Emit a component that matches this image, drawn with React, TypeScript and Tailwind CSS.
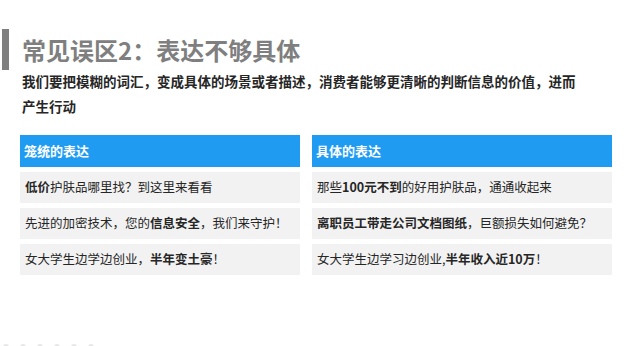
const vague = [
  <><b>低价</b>护肤品哪里找？到这里来看看</>,
  <>先进的加密技术，您的<b>信息安全</b>，我们来守护！</>,
  <>女大学生边学边创业，<b>半年变土豪</b>！</>,
];

const concrete = [
  <>那些<b>100元不到</b>的好用护肤品，通通收起来</>,
  <><b>离职员工带走公司文档图纸</b>，巨额损失如何避免？</>,
  <>女大学生边学习边创业,<b>半年收入近10万</b>！</>,
];

function Column({ title, items, width }: { title: string; items: React.ReactNode[]; width: string }) {
  return (
    <div className={`flex flex-col gap-[5px] ${width}`}>
      <div className="h-[32px] flex items-center px-[4px] bg-[#1f9cf2] text-white text-[13px] font-bold">
        {title}
      </div>
      {items.map((item, i) => (
        <div key={i} className="h-[31px] flex items-center px-[5px] bg-[#f2f2f2] text-[12.5px] text-[#262626] whitespace-nowrap">
          <span>{item}</span>
        </div>
      ))}
    </div>
  );
}

export default function App() {
  return (
    <div className="w-[640px] h-[346px] bg-white overflow-hidden flex flex-col font-['Microsoft_YaHei','Noto_Sans_CJK_SC',sans-serif]">
      <div className="flex items-center h-[41px] mt-[29px]">
        <div className="w-[7px] h-full ml-[2px] bg-[#7f7f7f]" />
        <h1 className="ml-[13px] text-[24px] font-bold leading-none text-[#7f7f7f]">常见误区2：表达不够具体</h1>
      </div>
      <p className="ml-[22px] -mt-[1px] text-[13.5px] font-bold leading-[25px] text-[#262626] whitespace-nowrap">
        我们要把模糊的词汇，变成具体的场景或者描述，消费者能够更清晰的判断信息的价值，进而
        <br />
        产生行动
      </p>

      <div className="flex gap-[12px] ml-[20px] mt-[16px]">
        <Column title="笼统的表达" items={vague} width="w-[280px]" />
        <Column title="具体的表达" items={concrete} width="w-[300px]" />
      </div>

      {/* slide pager dots, mostly below the fold */}
      <div className="mt-auto mb-[-4px] flex gap-[11px] pl-[3px]">
        {[0, 1, 2, 3, 4, 5].map((d) => (
          <div key={d} className="w-[6px] h-[6px] rounded-full bg-[#e6e6e6]" />
        ))}
      </div>
    </div>
  );
}
